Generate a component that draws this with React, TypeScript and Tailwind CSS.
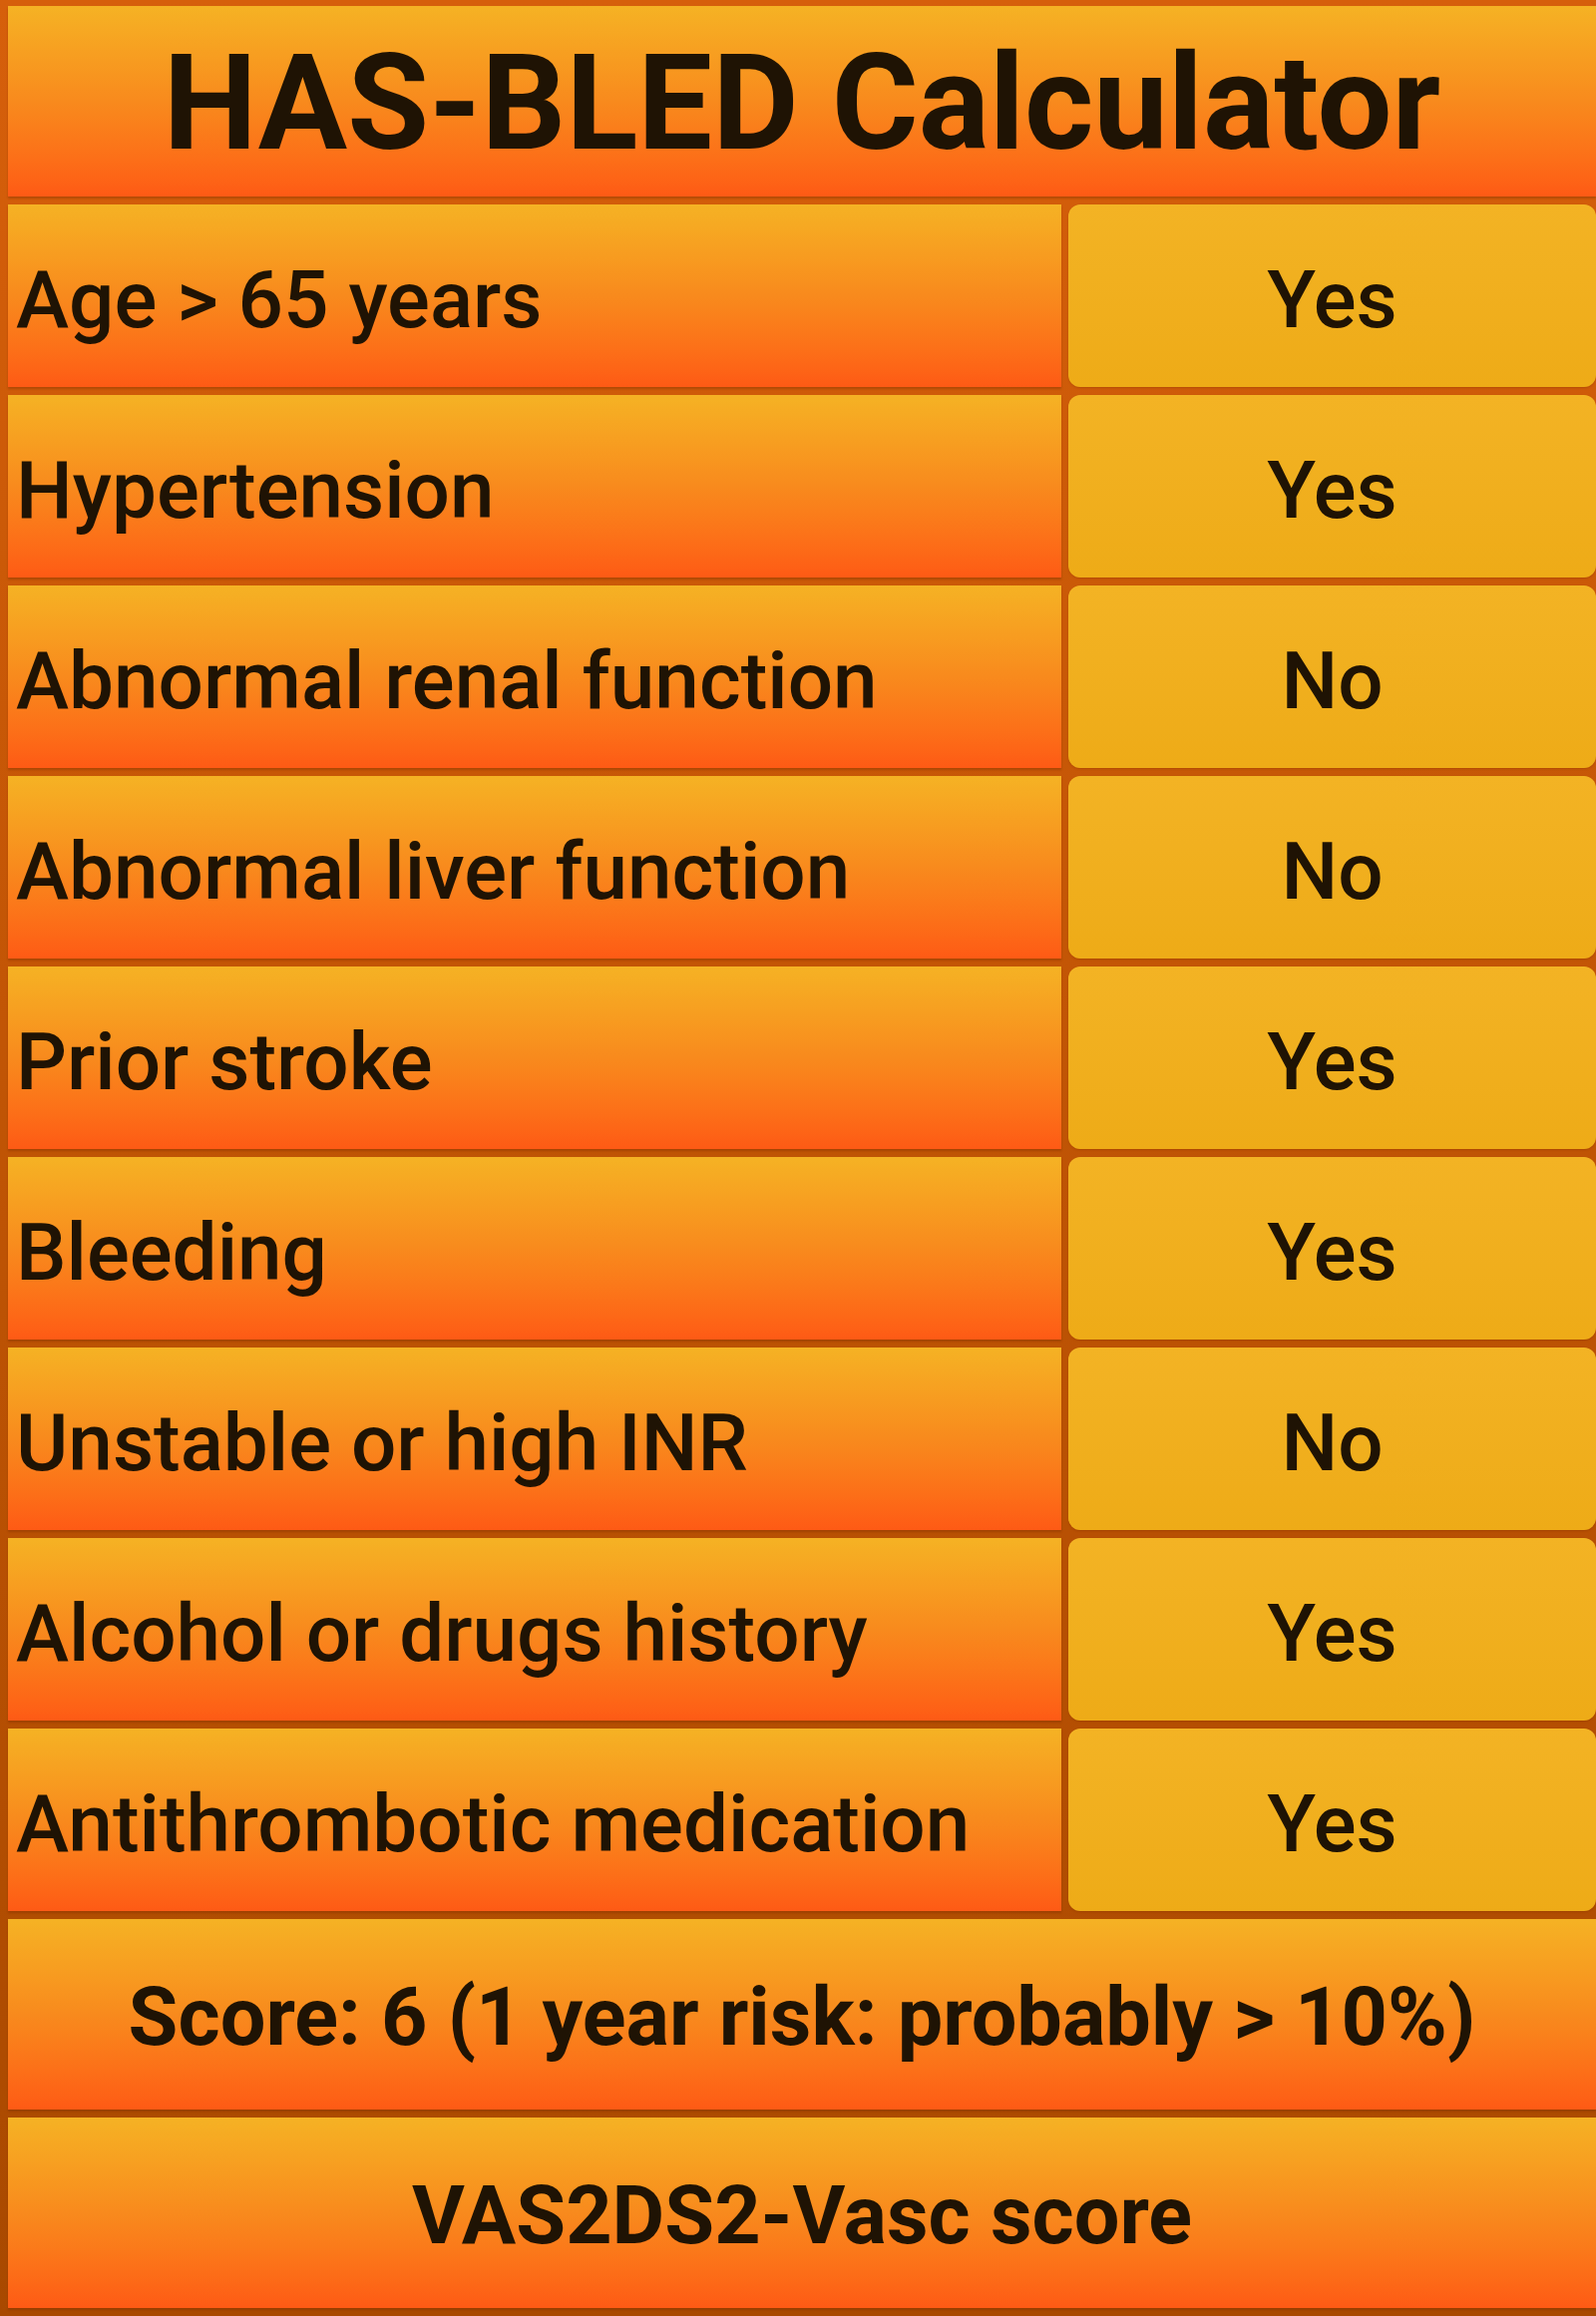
import React from 'react';

interface Factor {
  label: string;
  yes: boolean;
}

const factors: Factor[] = [
  { label: 'Age > 65 years', yes: true },
  { label: 'Hypertension', yes: true },
  { label: 'Abnormal renal function', yes: false },
  { label: 'Abnormal liver function', yes: false },
  { label: 'Prior stroke', yes: true },
  { label: 'Bleeding', yes: true },
  { label: 'Unstable or high INR', yes: false },
  { label: 'Alcohol or drugs history', yes: true },
  { label: 'Antithrombotic medication', yes: true },
];

const cell =
  'bg-gradient-to-b from-[#f5b224] via-[#f88a1d] to-[#fe5a15] shadow-[0_2px_2px_rgba(120,40,0,0.35)]';

const App: React.FC = () => {
  const score = factors.filter((f) => f.yes).length;

  return (
    <div
      className="w-[1600px] h-[2322px] bg-gradient-to-b from-[#d65f0b] to-[#a94900] pl-2 pt-[6px] flex flex-col gap-2 text-[#1f1304] overflow-hidden"
      style={{ fontFamily: 'Roboto, "Liberation Sans", sans-serif' }}
    >
      {/* Header */}
      <div className={`${cell} h-[191px] flex items-center justify-center pt-[4px]`}>
        <h1 className="text-[133px] font-bold leading-none">HAS-BLED Calculator</h1>
      </div>

      {/* Factor rows */}
      {factors.map((f) => (
        <div key={f.label} className="h-[183px] flex gap-[7px]">
          <div className={`${cell} w-[1056px] flex items-center pl-[8px] pt-[8px]`}>
            <span className="text-[80px] font-medium leading-none">{f.label}</span>
          </div>
          <button className="flex-1 rounded-[12px] bg-gradient-to-b from-[#f3b324] to-[#eeab17] flex items-center justify-center pt-[8px] shadow-[0_1px_2px_rgba(120,40,0,0.3)]">
            <span className="text-[80px] font-medium leading-none">{f.yes ? 'Yes' : 'No'}</span>
          </button>
        </div>
      ))}

      {/* Score */}
      <div className={`${cell} h-[191px] flex items-center justify-center pt-[6px]`}>
        <span className="text-[81px] font-bold leading-none">
          Score: {score} (1 year risk: probably &gt; 10%)
        </span>
      </div>

      {/* Link to other score */}
      <button className={`${cell} h-[191px] flex items-center justify-center pt-[6px]`}>
        <span className="text-[81px] font-bold leading-none">VAS2DS2-Vasc score</span>
      </button>
    </div>
  );
};

export default App;
